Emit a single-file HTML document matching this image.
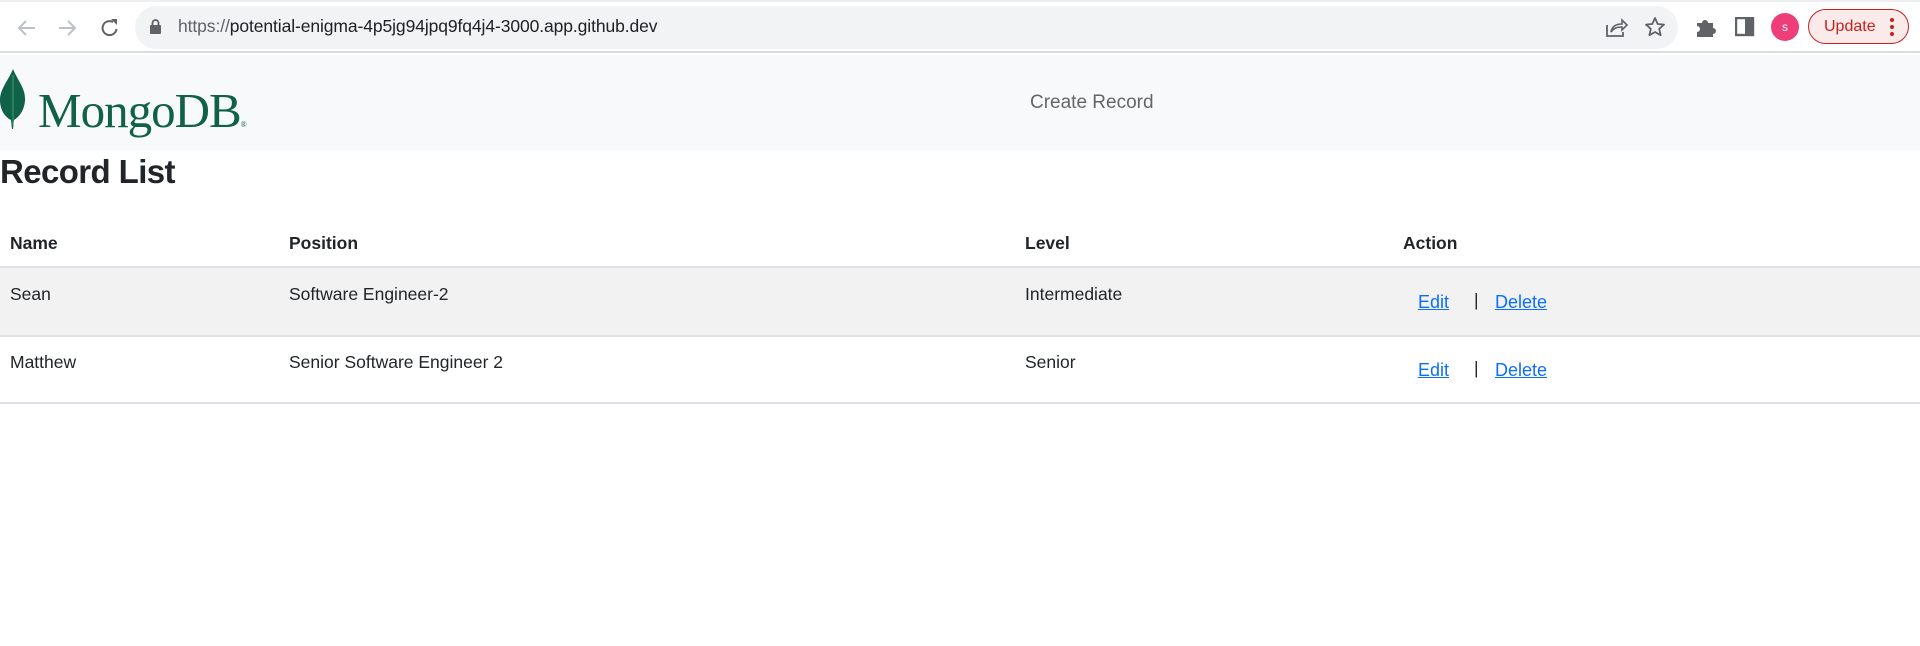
<!DOCTYPE html>
<html><head><meta charset="utf-8"><style>
*{box-sizing:border-box;margin:0;padding:0}
body{width:1920px;height:646px;background:#fff;font-family:"Liberation Sans",sans-serif;position:relative;overflow:hidden;color:#212529}
.abs{position:absolute}
#bar{left:0;top:0;width:1920px;height:53px;background:#fff;border-bottom:2px solid #dadce0}
#topline{left:0;top:0;width:1920px;height:2px;background:#eceef1}
#omni{left:135px;top:6px;width:1543px;height:43px;border-radius:22px;background:#f1f3f4}
#url{left:178px;top:16px;font-size:17.5px;color:#202124;letter-spacing:-0.1px}
#url span{color:#5f6368}
#nav{left:0;top:55px;width:1920px;height:95px;background:#f8f9fa}
#mongo{left:38px;top:82px;font-family:"Liberation Serif",serif;font-size:49px;color:#116149;letter-spacing:-1px}
#create{left:1030px;top:92px;font-size:19px;color:rgba(0,0,0,.6)}
h3{position:absolute;left:0;top:153px;font-size:33px;font-weight:600;letter-spacing:-0.6px}
.th{position:absolute;top:233px;font-size:17.5px;font-weight:bold}
.td{position:absolute;font-size:17.5px}
a{color:#0d6efd;text-decoration:underline;font-size:18px;position:absolute}
.line{position:absolute;left:0;width:1920px;height:2px;background:#dee2e6}
</style></head><body>
<div id="bar" class="abs"></div>
<div id="topline" class="abs"></div>
<svg class="abs" style="left:16px;top:17px" width="110" height="22" viewBox="0 0 110 22">
<g fill="none" stroke="#bdc1c6" stroke-width="2"><path d="M19 11H4M10 4l-7 7 7 7"/><path d="M43 11h15M52 4l7 7-7 7"/></g>
<path d="M97 5a7 7 0 1 0 3.5 7" fill="none" stroke="#5f6368" stroke-width="2"/><path d="M95 2h6v6z" fill="#5f6368"/>
</svg>
<div id="omni" class="abs"></div>
<svg class="abs" style="left:149px;top:19px" width="13" height="16"><rect x="1" y="6" width="11" height="9" rx="1" fill="#5f6368"/><path d="M3.5 6V4a3 3 0 0 1 6 0v2" fill="none" stroke="#5f6368" stroke-width="1.8"/></svg>
<div id="url" class="abs"><span>https://</span>potential-enigma-4p5jg94jpq9fq4j4-3000.app.github.dev</div>
<svg class="abs" style="left:1604px;top:16px" width="24" height="22"><path d="M3 9v11h16v-4" fill="none" stroke="#5f6368" stroke-width="1.8"/><path d="M7 16c1-6 5-8 11-8V4l5 5-5 5v-3c-5 0-8 1-11 5z" fill="none" stroke="#5f6368" stroke-width="1.6"/></svg>
<svg class="abs" style="left:1643px;top:15px" width="24" height="24"><path d="M12 3l2.7 6 6.3.6-4.8 4.2 1.4 6.4L12 17l-5.6 3.2 1.4-6.4L3 9.6 9.3 9z" fill="none" stroke="#5f6368" stroke-width="1.8" stroke-linejoin="round"/></svg>
<svg class="abs" style="left:1695px;top:16px" width="22" height="22"><path d="M2 7h5a3 3 0 0 1 6 0h5v5a3 3 0 0 1 0 6v3H2v-5a3 3 0 0 0 0-6z" fill="#5f6368"/></svg>
<svg class="abs" style="left:1735px;top:17px" width="20" height="20"><rect x="1" y="1" width="17" height="17" fill="none" stroke="#5f6368" stroke-width="2.4"/><rect x="10" y="1" width="8" height="17" fill="#5f6368"/></svg>
<div class="abs" style="left:1771px;top:13px;width:28px;height:28px;border-radius:50%;background:#ee3e7a;color:#fff;font-size:12px;text-align:center;line-height:28px">s</div>
<div class="abs" style="left:1808px;top:9px;width:101px;height:35px;border-radius:18px;border:1.5px solid #c5221f;background:#fbeaea"></div>
<div class="abs" style="left:1824px;top:17px;font-size:16px;line-height:20px;color:#c5221f">Update</div>
<svg class="abs" style="left:1889px;top:17px" width="6" height="22"><circle cx="3" cy="3" r="2" fill="#c5221f"/><circle cx="3" cy="10" r="2" fill="#c5221f"/><circle cx="3" cy="17" r="2" fill="#c5221f"/></svg>

<div id="nav" class="abs"></div>
<svg class="abs" style="left:0;top:69px" width="28" height="60" viewBox="0 0 28 60"><path d="M13 0C18 12 26 20 25 32c-1 10-6 16-11 19L13 60h-1l-1-9C5 48 0 41 0 31 0 20 8 12 13 0z" fill="#116149"/><path d="M13 6v50" stroke="#3f9f6b" stroke-width="1"/></svg>
<div id="mongo" class="abs">MongoDB<span style="font-size:8px">®</span></div>
<div id="create" class="abs">Create Record</div>

<h3>Record List</h3>
<div class="th" style="left:10px">Name</div>
<div class="th" style="left:289px">Position</div>
<div class="th" style="left:1025px">Level</div>
<div class="th" style="left:1403px">Action</div>
<div class="line" style="top:266px"></div>
<div class="abs" style="left:0;top:268px;width:1920px;height:67px;background:#f2f2f2"></div>
<div class="line" style="top:335px"></div>
<div class="line" style="top:402px"></div>
<div class="td" style="left:10px;top:284px">Sean</div>
<div class="td" style="left:289px;top:284px">Software Engineer-2</div>
<div class="td" style="left:1025px;top:284px">Intermediate</div>
<a style="left:1418px;top:292px">Edit</a><div class="td" style="left:1474px;top:290px">|</div><a style="left:1495px;top:292px">Delete</a>
<div class="td" style="left:10px;top:352px">Matthew</div>
<div class="td" style="left:289px;top:352px">Senior Software Engineer 2</div>
<div class="td" style="left:1025px;top:352px">Senior</div>
<a style="left:1418px;top:360px">Edit</a><div class="td" style="left:1474px;top:358px">|</div><a style="left:1495px;top:360px">Delete</a>
</body></html>
